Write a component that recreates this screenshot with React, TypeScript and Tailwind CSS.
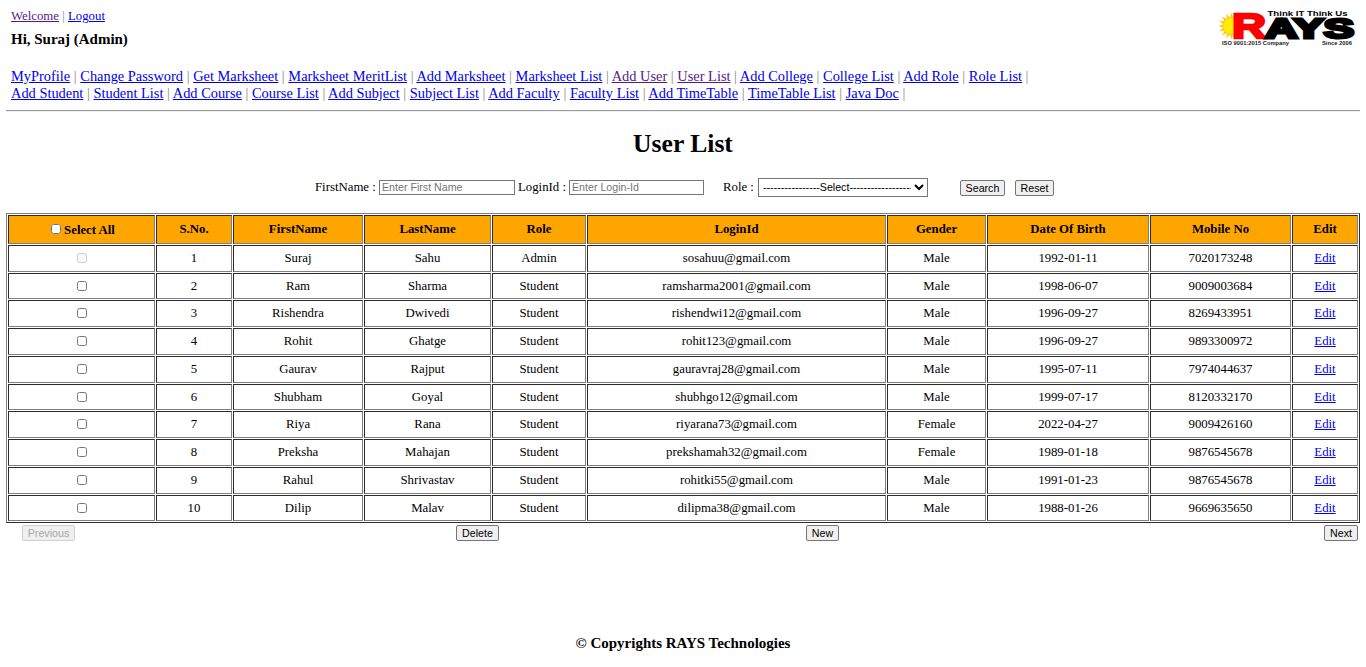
import React from "react";

type NavItem = { label: string; visited?: boolean };

const navRows: NavItem[][] = [
  [
    { label: "MyProfile" },
    { label: "Change Password" },
    { label: "Get Marksheet" },
    { label: "Marksheet MeritList" },
    { label: "Add Marksheet" },
    { label: "Marksheet List" },
    { label: "Add User", visited: true },
    { label: "User List", visited: true },
    { label: "Add College" },
    { label: "College List" },
    { label: "Add Role" },
    { label: "Role List" },
  ],
  [
    { label: "Add Student" },
    { label: "Student List" },
    { label: "Add Course" },
    { label: "Course List" },
    { label: "Add Subject" },
    { label: "Subject List" },
    { label: "Add Faculty" },
    { label: "Faculty List" },
    { label: "Add TimeTable" },
    { label: "TimeTable List" },
    { label: "Java Doc" },
  ],
];

const headers = ["S.No.", "FirstName", "LastName", "Role", "LoginId", "Gender", "Date Of Birth", "Mobile No", "Edit"];

const users = [
  ["Suraj", "Sahu", "Admin", "sosahuu@gmail.com", "Male", "1992-01-11", "7020173248"],
  ["Ram", "Sharma", "Student", "ramsharma2001@gmail.com", "Male", "1998-06-07", "9009003684"],
  ["Rishendra", "Dwivedi", "Student", "rishendwi12@gmail.com", "Male", "1996-09-27", "8269433951"],
  ["Rohit", "Ghatge", "Student", "rohit123@gmail.com", "Male", "1996-09-27", "9893300972"],
  ["Gaurav", "Rajput", "Student", "gauravraj28@gmail.com", "Male", "1995-07-11", "7974044637"],
  ["Shubham", "Goyal", "Student", "shubhgo12@gmail.com", "Male", "1999-07-17", "8120332170"],
  ["Riya", "Rana", "Student", "riyarana73@gmail.com", "Female", "2022-04-27", "9009426160"],
  ["Preksha", "Mahajan", "Student", "prekshamah32@gmail.com", "Female", "1989-01-18", "9876545678"],
  ["Rahul", "Shrivastav", "Student", "rohitki55@gmail.com", "Male", "1991-01-23", "9876545678"],
  ["Dilip", "Malav", "Student", "dilipma38@gmail.com", "Male", "1988-01-26", "9669635650"],
];

const rowHeights = ["h-[27px]", "h-[26px]", "h-[27px]", "h-[27px]", "h-[27px]", "h-[26px]", "h-[27px]", "h-[27px]", "h-[27px]", "h-[26px]"];

const cell = "border border-t-[#2c2c2c] border-l-[#2c2c2c] border-r-[#808080] border-b-[#808080] p-0 text-center";

const button =
  "h-4 shrink-0 rounded-[2px] border border-[#767676] bg-[#efefef] p-0 text-center font-['Liberation_Sans',Arial,sans-serif] text-[10.67px] leading-[14px] text-black";

const input =
  "h-[15px] border border-[#767676] bg-white px-0.5 pb-0.5 font-['Liberation_Sans',Arial,sans-serif] text-[10.67px] leading-[11px] placeholder:text-[#757575]";

function Link({ label, visited }: NavItem) {
  return (
    <a href="#" className={visited ? "text-[#551a8b] underline" : "text-[#0000ee] underline"}>
      {label}
    </a>
  );
}

function Logo() {
  const rays = Array.from({ length: 16 }, (_, i) => {
    const a = (i * Math.PI) / 8;
    const p = (r: number, t: number) => `${13.5 + r * Math.cos(t)},${22 + r * Math.sin(t)}`;
    return `${p(8.5, a - 0.16)} ${p(13.5, a)} ${p(8.5, a + 0.16)}`;
  });
  return (
    <svg width="140" height="44" viewBox="0 0 140 44" fontFamily="'Liberation Sans', Arial, sans-serif" fontWeight="bold">
      {rays.map((r, i) => (
        <polygon key={i} points={r} fill="#ffc400" />
      ))}
      <circle cx="13.5" cy="22" r="8.8" fill="#ffee00" stroke="#ffc020" strokeWidth="1" />
      <text x="14" y="34" fontSize="34.5" fill="#ff0000" stroke="#ff0000" strokeWidth="2.4" textLength="34" lengthAdjust="spacingAndGlyphs">R</text>
      <text x="47" y="33.5" fontSize="28" fill="#000" stroke="#000" strokeWidth="3" textLength="89" lengthAdjust="spacingAndGlyphs">AYS</text>
      <text x="49.5" y="11.6" fontSize="7.4" fill="#000" textLength="80" lengthAdjust="spacingAndGlyphs">Think IT Think Us</text>
      <text x="4" y="41.3" fontSize="4.6" fill="#222" textLength="67" lengthAdjust="spacingAndGlyphs">ISO 9001:2015 Company</text>
      <text x="104" y="41.3" fontSize="4.6" fill="#222" textLength="30" lengthAdjust="spacingAndGlyphs">Since 2006</text>
    </svg>
  );
}

export default function App() {
  return (
    <div className="flex h-[667px] w-[1366px] flex-col overflow-hidden bg-white px-1.5 font-['Liberation_Serif','Times_New_Roman',serif] text-[12.8px] text-black">
      <header className="flex h-[67px] shrink-0 justify-between pl-[5px]">
        <div className="pt-2">
          <p className="h-4 leading-4">
            <Link label="Welcome" visited /> <span className="text-[#888]">|</span> <Link label="Logout" />
          </p>
          <h3 className="mt-[7px] text-[14.98px] leading-[17px] font-bold">Hi, Suraj (Admin)</h3>
        </div>
        <div className="pt-1 pr-[2px]">
          <Logo />
        </div>
      </header>

      <nav className="h-[43px] shrink-0 pt-px pl-[5px] text-[14.4px] leading-[17px]">
        {navRows.map((row, r) => (
          <div key={r} className="whitespace-nowrap">
            {row.map((item) => (
              <React.Fragment key={item.label}>
                <Link {...item} /> <span className="text-[#888]">|</span>{" "}
              </React.Fragment>
            ))}
          </div>
        ))}
      </nav>
      <hr className="h-0.5 w-[1354px] shrink-0 border-t border-b border-t-[#9a9a9a] border-b-[#eee]" />

      <h1 className="mt-[17px] h-[30px] shrink-0 text-center text-[25.6px] leading-[30px] font-bold">User List</h1>

      <form className="mt-[19px] flex h-[19px] shrink-0 items-center pl-[309px] whitespace-nowrap">
        <label className="w-16">FirstName :</label>
        <input className={`${input} w-[136px]`} placeholder="Enter First Name" />
        <label className="ml-[3px] w-[51px]">LoginId :</label>
        <input className={`${input} w-[135px]`} placeholder="Enter Login-Id" />
        <label className="ml-[19px] w-[35px]">Role :</label>
        <select className="h-[19px] w-[170px] border border-[#767676] bg-white pb-px font-['Liberation_Sans',Arial,sans-serif] text-[10.67px] text-black">
          <option>----------------Select-------------------</option>
        </select>
        <button type="button" className={`${button} ml-8 w-[45px] pb-px`}>Search</button>
        <button type="button" className={`${button} ml-2.5 w-[39px] pb-px`}>Reset</button>
      </form>

      <table className="mt-4 w-[1354px] shrink-0 table-fixed border-separate border-spacing-px border border-t-[#808080] border-r-[#2c2c2c] border-b-[#2c2c2c] border-l-[#808080] leading-[15px]">
        <colgroup>
          <col className="w-[147px]" />
          <col className="w-[76px]" />
          <col className="w-[130px]" />
          <col className="w-[127px]" />
          <col className="w-[94px]" />
          <col className="w-[299px]" />
          <col className="w-[99px]" />
          <col className="w-[162px]" />
          <col className="w-[141px]" />
          <col className="w-[66px]" />
        </colgroup>
        <thead>
          <tr className="bg-[#ffa500]">
            <th className={`${cell} h-[29px]`}>
              <span className="flex items-center justify-center gap-[3px] pt-px pl-[3px]">
                <input type="checkbox" className="mb-0.5 size-2.5" />
                Select All
              </span>
            </th>
            {headers.map((h) => (
              <th key={h} className={cell}>{h}</th>
            ))}
          </tr>
        </thead>
        <tbody>
          {users.map((user, i) => (
            <tr key={user[3]}>
              <td className={`${cell} ${rowHeights[i]}`}>
                <input type="checkbox" disabled={i === 0} className="mx-auto mb-px block size-2.5" />
              </td>
              <td className={cell}>{i + 1}</td>
              {user.map((value, c) => (
                <td key={c} className={cell}>{value}</td>
              ))}
              <td className={cell}>
                <Link label="Edit" />
              </td>
            </tr>
          ))}
        </tbody>
      </table>

      <div className="mt-0.5 flex h-4 shrink-0 pl-4">
        <button disabled className="h-4 w-[53px] rounded-[2px] border border-[#cfcfcf] bg-[#efefef] p-0 font-['Liberation_Sans',Arial,sans-serif] text-[10.67px] leading-[14px] text-[#a8a8a8]">
          Previous
        </button>
        <button className={`${button} ml-[381px] w-[43px]`}>Delete</button>
        <button className={`${button} ml-[307px] w-[33px]`}>New</button>
        <button className={`${button} ml-[485px] w-[34px]`}>Next</button>
      </div>

      <footer className="mt-[94px] text-center text-[14.98px] leading-[17px] font-bold">© Copyrights RAYS Technologies</footer>
    </div>
  );
}
